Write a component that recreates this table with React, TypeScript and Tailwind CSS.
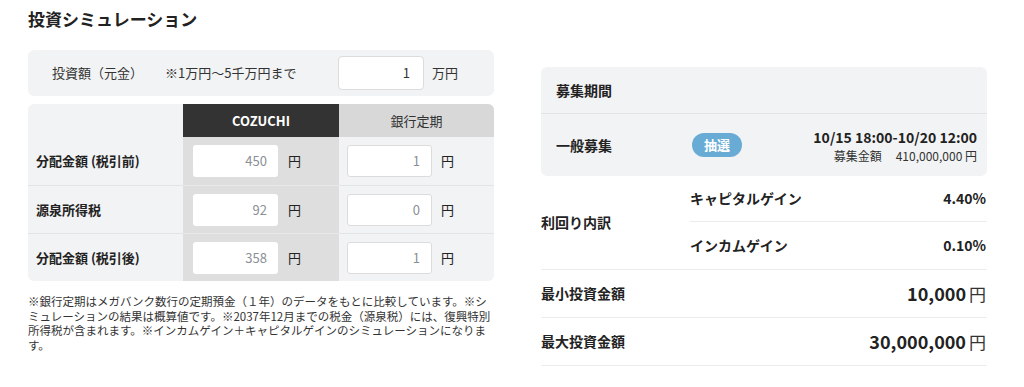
const font = { fontFamily: '"Noto Sans CJK JP", "Noto Sans", sans-serif' };

const rows = [
	{ label: "分配金額 (税引前)", cozuchi: "450", bank: "1" },
	{ label: "源泉所得税", cozuchi: "92", bank: "0" },
	{ label: "分配金額 (税引後)", cozuchi: "358", bank: "1" },
];

const NumBox = ({ value, bordered }: { value: string; bordered?: boolean }) => (
	<div
		className={
			"h-[32px] w-[85px] bg-white rounded-[3px] flex items-center justify-end pr-[11px] text-[13px] text-[#8a8f96] " +
			(bordered ? "border border-[#dcdcdc]" : "")
		}
	>
		{value}
	</div>
);

const Simulation = () => (
	<div className="w-[466px]">
		<h2 className="text-[17px] font-bold text-[#222] leading-[24px] pt-[7px]">投資シミュレーション</h2>

		<div className="mt-[19px] h-[46px] bg-[#f2f3f4] rounded-[6px] flex items-center pl-[24px] text-[13px] text-[#333]">
			<span className="w-[113px]">投資額（元金）</span>
			<span className="w-[173px]">※1万円〜5千万円まで</span>
			<div className="h-[34px] w-[86px] bg-white border border-[#dcdcdc] rounded-[4px] flex items-center justify-end pr-[13px]">
				1
			</div>
			<span className="ml-[8px]">万円</span>
		</div>

		<div className="mt-[8px] rounded-[6px] overflow-hidden bg-[#f2f3f4] grid grid-cols-[155px_156px_155px] text-[13px] text-[#222]">
			<div className="h-[33px]" />
			<div className="h-[33px] bg-[#333333] text-white flex items-center justify-center font-bold">COZUCHI</div>
			<div className="h-[33px] bg-[#d8d8d8] text-[#333] flex items-center justify-center">銀行定期</div>
			{rows.map((r, i) => (
				<div key={r.label} className="contents">
					<div className={"h-[48px] flex items-center pl-[8px] font-bold " + (i > 0 ? "border-t border-[#e3e4e6]" : "")}>
						{r.label}
					</div>
					<div className={"h-[48px] bg-[#dedede] flex items-center pl-[10px] gap-[10px] " + (i > 0 ? "border-t border-[#e9e9e9]" : "")}>
						<NumBox value={r.cozuchi} />
						<span>円</span>
					</div>
					<div className={"h-[48px] flex items-center pl-[8px] gap-[9px] " + (i > 0 ? "border-t border-[#e3e4e6]" : "")}>
						<NumBox value={r.bank} bordered />
						<span>円</span>
					</div>
				</div>
			))}
		</div>

		<p className="mt-[13px] text-[11.5px] leading-[14.5px] text-[#333]">
			※銀行定期はメガバンク数行の定期預金（１年）のデータをもとに比較しています。※シミュレーションの結果は概算値です。※2037年12月までの税金（源泉税）には、復興特別所得税が含まれます。※インカムゲイン＋キャピタルゲインのシミュレーションになります。
		</p>
	</div>
);

const Summary = () => (
	<div className="w-[446px] mt-[67px] text-[#222]">
		<div className="bg-[#f2f3f4] rounded-[6px]">
			<div className="h-[47px] flex items-center pl-[15px] text-[14px] font-bold border-b border-[#e2e3e5]">募集期間</div>
			<div className="h-[62px] flex items-center pl-[15px] pr-[10px]">
				<span className="w-[136px] text-[14px] font-bold">一般募集</span>
				<span className="h-[24px] w-[50px] rounded-full bg-[#68acd6] text-white text-[13px] font-bold flex items-center justify-center">
					抽選
				</span>
				<div className="ml-auto flex flex-col items-end">
					<span className="text-[14px] font-bold leading-[20px]">10/15 18:00-10/20 12:00</span>
					<span className="text-[12px] leading-[17px] text-[#333]">
						募集金額<span className="ml-[14px]">410,000,000 円</span>
					</span>
				</div>
			</div>
		</div>

		<div className="flex items-center border-b border-[#ececec]">
			<span className="w-[149px] text-[14px] font-bold">利回り内訳</span>
			<div className="flex-1">
				<div className="h-[46px] flex items-center justify-between border-b border-[#ececec] text-[14px] font-bold">
					<span>キャピタルゲイン</span>
					<span className="pr-[1px]">4.40%</span>
				</div>
				<div className="h-[47px] flex items-center justify-between text-[14px] font-bold">
					<span>インカムゲイン</span>
					<span className="pr-[1px]">0.10%</span>
				</div>
			</div>
		</div>

		{[
			{ label: "最小投資金額", value: "10,000" },
			{ label: "最大投資金額", value: "30,000,000" },
		].map((r) => (
			<div key={r.label} className="h-[48px] flex items-center justify-between border-b border-[#ececec]">
				<span className="text-[14px] font-bold">{r.label}</span>
				<span className="pr-[1px] flex items-baseline">
					<span className="text-[18px] font-bold">{r.value}</span>
					<span className="text-[17px] ml-[3px] text-[#333]">円</span>
				</span>
			</div>
		))}
	</div>
);

export default function App() {
	return (
		<div className="w-[1024px] h-[387px] bg-white flex gap-[47px] pl-[28px]" style={font}>
			<Simulation />
			<Summary />
		</div>
	);
}
